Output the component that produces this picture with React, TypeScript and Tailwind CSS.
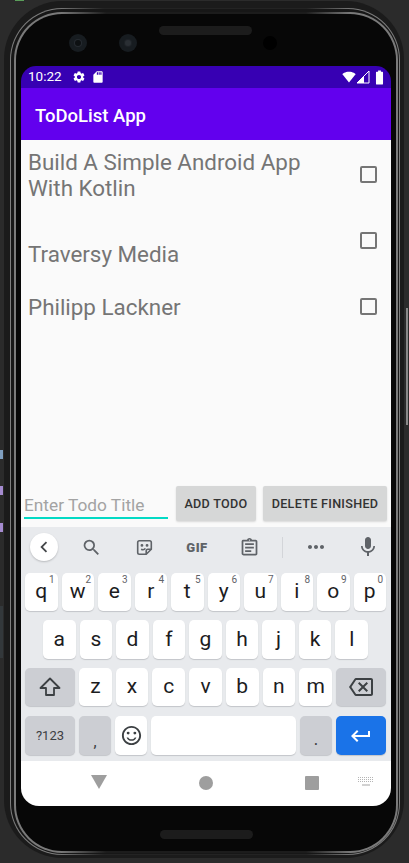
import { ReactNode } from "react";
import {
  MdBatteryFull,
  MdChevronLeft,
  MdKeyboardReturn,
  MdMic,
  MdMoreHoriz,
  MdOutlineAssignment,
  MdOutlineBackspace,
  MdOutlineSentimentSatisfied,
  MdSdCard,
  MdSearch,
  MdSettings,
  MdSignalWifi4Bar,
} from "react-icons/md";
import { twMerge } from "tailwind-merge";

const todos = [
  { title: "Build A Simple Android App With Kotlin", rowClass: "h-[66px] pt-[9px]", boxClass: "mt-[17px]" },
  { title: "Traversy Media", rowClass: "h-[66px] pt-[35px]", boxClass: "mt-[-9px]" },
  { title: "Philipp Lackner", rowClass: "h-[66px] pt-[22px]", boxClass: "mt-[4px]" },
];

const numberRow = [
  ["q", "1"],
  ["w", "2"],
  ["e", "3"],
  ["r", "4"],
  ["t", "5"],
  ["y", "6"],
  ["u", "7"],
  ["i", "8"],
  ["o", "9"],
  ["p", "0"],
];

function Key({ children, className = "" }: { children?: ReactNode; className?: string }) {
  return (
    <div
      className={twMerge(
        "relative flex h-full min-w-0 items-center justify-center rounded-[5px] bg-white text-[21px] text-[#1c1c1e] shadow-[0_1px_1px_#c3c5c9]",
        className,
      )}
    >
      {children}
    </div>
  );
}

function Frame() {
  return (
    <div className="flex h-[52px] items-start">
      <div className="ml-[48px] mt-[20px] flex h-[18px] w-[18px] items-center justify-center rounded-full bg-[#171c20]">
        <div className="h-[6px] w-[6px] rounded-full bg-[#0d1012] ring-1 ring-[#262b30]" />
      </div>
      <div className="ml-[32px] mt-[20px] flex h-[18px] w-[18px] items-center justify-center rounded-full bg-[#171c20]">
        <div className="h-[6px] w-[6px] rounded-full bg-[#2a2f34] ring-1 ring-[#1e2327]" />
      </div>
      <div className="ml-[22px] mt-[12px] h-[9px] w-[93px] rounded-full bg-[#1c1c1c]" />
      <div className="ml-[11px] mt-[22px] h-[14px] w-[14px] rounded-full bg-black" />
    </div>
  );
}

function StatusBar() {
  return (
    <div className="flex h-[22px] flex-none items-center bg-[#3700b3] pl-[7px] pr-[3px] text-white">
      <span className="text-[13.5px] leading-none">10:22</span>
      <MdSettings className="ml-[10px] text-[14px]" />
      <MdSdCard className="ml-[5px] text-[14px]" />
      <div className="ml-auto flex items-center">
        <MdSignalWifi4Bar className="text-[14px]" />
        <svg viewBox="0 0 14 14" className="h-[14px] w-[14px]">
          <path d="M13 1v12H1z" fill="none" stroke="#fff" strokeWidth="1" />
          <path d="M8 6v7H1z" fill="#fff" />
        </svg>
        <MdBatteryFull className="ml-px text-[17px]" />
      </div>
    </div>
  );
}

function TodoList() {
  return (
    <div className="flex-1 bg-[#fafafa]">
      {todos.map((todo) => (
        <div key={todo.title} className={`flex justify-between pl-[7px] pr-[14px] ${todo.rowClass}`}>
          <div className="w-[290px] text-[22.4px] leading-[26px] text-[#757575]">{todo.title}</div>
          <div className={`h-[17px] w-[17px] rounded-[2px] border-2 border-[#757575] ${todo.boxClass}`} />
        </div>
      ))}
    </div>
  );
}

function AddRow() {
  return (
    <div className="flex h-[41px] flex-none items-start bg-[#fafafa] pl-[3px]">
      <div className="mt-[6px] h-[27px] w-[144px] flex-none border-b-2 border-[#03dac5] pt-px text-[17.3px] leading-[24px] text-[#a3a3a3]">
        Enter Todo Title
      </div>
      <div className="ml-[8px] flex h-[35px] w-[80px] flex-none items-center justify-center rounded-[2px] bg-[#d6d7d7] pt-px text-[12.6px] font-medium tracking-[0.3px] text-[#333333] shadow-[0_1px_2px_#d8d8d8]">
        ADD TODO
      </div>
      <div className="ml-[7px] flex h-[35px] w-[124px] flex-none items-center justify-center rounded-[2px] bg-[#d6d7d7] pt-px text-[12.6px] font-medium tracking-[0.3px] text-[#333333] shadow-[0_1px_2px_#d8d8d8]">
        DELETE FINISHED
      </div>
    </div>
  );
}

function Toolbar() {
  return (
    <div className="flex h-[46px] items-center pb-[6px] pl-[5px] text-[#5f6368]">
      <div className="flex h-[28px] w-[28px] flex-none items-center justify-center rounded-full bg-white shadow-[0_1px_2px_#b8babd]">
        <MdChevronLeft className="text-[22px] text-[#44474a]" />
      </div>
      <MdSearch className="ml-[23px] flex-none text-[21px]" />
      <svg viewBox="0 0 20 20" className="ml-[34px] h-[17px] w-[17px] flex-none" fill="none" stroke="#5f6368" strokeWidth="1.9">
        <path d="M4 2h12a2 2 0 0 1 2 2v8l-6 6H4a2 2 0 0 1-2-2V4a2 2 0 0 1 2-2z" />
        <path d="M18 12h-4a2 2 0 0 0-2 2v4" />
        <path d="M6 12c2 1 4 .5 5-1" />
        <circle cx="7" cy="7.5" r=".7" fill="#5f6368" />
        <circle cx="13" cy="7.5" r=".7" fill="#5f6368" />
      </svg>
      <span className="ml-[27px] w-[34px] flex-none text-center text-[13px] font-black leading-none tracking-[0.5px] text-[#5f6368]">
        GIF
      </span>
      <MdOutlineAssignment className="ml-[25px] flex-none text-[21px]" />
      <div className="ml-[22px] h-[21px] w-px flex-none bg-[#d3d5d9]" />
      <MdMoreHoriz className="ml-[21px] flex-none text-[24px]" />
      <MdMic className="ml-[28px] flex-none text-[24px]" />
    </div>
  );
}

function Keyboard() {
  return (
    <div className="flex h-[234px] flex-none flex-col bg-[#e8eaed] pl-[4px] pr-[5px]">
      <Toolbar />
      <div className="grid h-[38px] grid-cols-10 gap-[4px]">
        {numberRow.map(([letter, digit]) => (
          <Key key={letter}>
            {letter}
            <span className="absolute right-[3px] top-[2px] text-[10px] leading-none text-[#5f6368]">{digit}</span>
          </Key>
        ))}
      </div>
      <div className="mt-[9px] grid h-[39px] grid-cols-9 gap-[4px] px-[18px]">
        {["a", "s", "d", "f", "g", "h", "j", "k", "l"].map((letter) => (
          <Key key={letter}>{letter}</Key>
        ))}
      </div>
      <div className="mt-[9px] flex h-[38px] gap-[4px]">
        <Key className="w-[50px] flex-none bg-[#ccced3]">
          <svg viewBox="0 0 22 20" className="h-[20px] w-[22px]" fill="none" stroke="#3c4043" strokeWidth="1.8" strokeLinejoin="round">
            <path d="M11 1.5 1.5 11H7v7h8v-7h5.5z" />
          </svg>
        </Key>
        <div className="grid flex-1 grid-cols-7 gap-[4px]">
          {["z", "x", "c", "v", "b", "n", "m"].map((letter) => (
            <Key key={letter}>{letter}</Key>
          ))}
        </div>
        <Key className="w-[50px] flex-none bg-[#ccced3]">
          <MdOutlineBackspace className="text-[24px] text-[#3c4043]" />
        </Key>
      </div>
      <div className="mt-[10px] flex h-[39px] gap-[4px]">
        <Key className="w-[50px] flex-none bg-[#ccced3] text-[13px] text-[#3c4043]">?123</Key>
        <Key className="w-[32px] flex-none items-end bg-[#ccced3] pb-[6px] text-[14px] font-medium leading-none text-[#3c4043]">,</Key>
        <Key className="w-[32px] flex-none">
          <MdOutlineSentimentSatisfied className="text-[23px] text-[#3c4043]" />
        </Key>
        <Key className="flex-1" />
        <Key className="w-[32px] flex-none items-end bg-[#ccced3] pb-[8px] text-[14px] font-medium leading-none text-[#3c4043]">.</Key>
        <Key className="w-[50px] flex-none bg-[#1a73e8] text-white">
          <MdKeyboardReturn className="text-[24px]" />
        </Key>
      </div>
    </div>
  );
}

function NavBar() {
  return (
    <div className="flex h-[45px] flex-none items-start bg-white pt-[14px]">
      <svg viewBox="0 0 16 14" className="ml-[70px] h-[14px] w-[16px] flex-none">
        <path d="M0 0h16L8 14z" fill="#9e9e9e" />
      </svg>
      <div className="ml-[92px] mt-px h-[14px] w-[14px] flex-none rounded-full bg-[#9e9e9e]" />
      <div className="ml-[92px] mt-px h-[14px] w-[14px] flex-none rounded-[1px] bg-[#9e9e9e]" />
      <svg viewBox="0 0 16 9" className="ml-[39px] mt-[2px] h-[9px] w-[16px] flex-none">
        <path d="M0 .5h16M0 2.5h16M0 4.5h16" stroke="#b5b5b5" strokeWidth="1" strokeDasharray="1 1" />
        <path d="M4 8h8" stroke="#a5a5a5" strokeWidth="1" />
      </svg>
    </div>
  );
}

export default function App() {
  return (
    <div className="relative h-[863px] w-[409px] overflow-hidden bg-[#2b2b2b] pl-[4px] pt-[1px] font-['Roboto',sans-serif]">
      {/* bits of the IDE behind the emulator */}
      <div className="absolute left-0 top-[606px] h-[52px] w-[3px] bg-[#33383b]" />
      <div className="absolute left-0 top-[450px] h-[9px] w-[3px] bg-[#7f9fc0]" />
      <div className="absolute left-0 top-[486px] h-[9px] w-[3px] bg-[#a58bd0]" />
      <div className="absolute left-0 top-[523px] h-[9px] w-[3px] bg-[#a58bd0]" />
      <div className="absolute left-[15px] top-0 h-px w-[9px] bg-[#5a9e5a]" />
      <div className="absolute left-[406px] top-[308px] h-[117px] w-[2px] bg-[#8a8a8a]" />

      <div className="relative h-[857px] w-[400px] rounded-[58px] bg-[#1b1b1b] pb-[3px] pl-[6px] pr-[4px] pt-[7px]">
        <div className="h-[847px] rounded-[52px] bg-[linear-gradient(90deg,#7d7d7d_0%,#7d7d7d_12%,#232323_24%,#232323_76%,#7d7d7d_88%,#7d7d7d_100%)] p-px">
          <div className="h-[845px] rounded-[51px] bg-[#171717] pb-px pl-[3px] pr-px pt-[3px]">
            <div className="h-[841px] rounded-[48px] bg-[linear-gradient(90deg,#7a7a7a_0%,#7a7a7a_12%,#1c1c1c_24%,#1c1c1c_76%,#7a7a7a_88%,#7a7a7a_100%)] p-[2px]">
              <div className="h-[837px] rounded-[46px] bg-[#070707] px-[5px]">
                <Frame />
                <div className="flex h-[740px] flex-col overflow-hidden rounded-b-[18px] rounded-t-[15px]">
                  <StatusBar />
                  <div className="flex h-[52px] flex-none items-center bg-[#6200ee] pl-[14px] pt-[5px] text-[18.5px] font-medium text-white">
                    ToDoList App
                  </div>
                  <TodoList />
                  <AddRow />
                  <Keyboard />
                  <NavBar />
                </div>
                <div className="mx-auto mt-[24px] h-[9px] w-[93px] rounded-full bg-[#1c1c1c]" />
              </div>
            </div>
          </div>
        </div>
      </div>
    </div>
  );
}
